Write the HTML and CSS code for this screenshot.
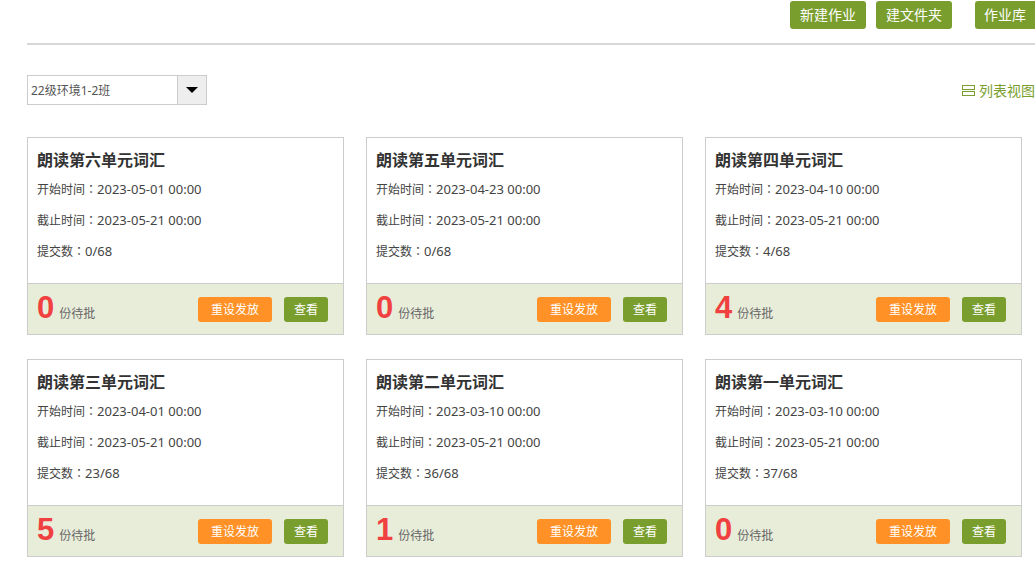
FILE: index.html
```html
<!DOCTYPE html>
<html lang="zh-CN">
<head>
    <meta charset="UTF-8">
    <title>作业</title>
    <link rel="stylesheet" href="styles.css">
</head>
<body>
    <header class="toolbar">
        <button type="button" class="btn btn-top">新建作业</button>
        <button type="button" class="btn btn-top">建文件夹</button>
        <button type="button" class="btn btn-top btn-library">作业库</button>
    </header>
    <div class="filter-bar">
        <div class="class-select">
            <select aria-label="班级">
                <option>22级环境1-2班</option>
            </select>
            <span class="select-arrow"></span>
        </div>
        <a href="#" class="view-link">
            <svg width="13" height="11" viewBox="0 0 13 11" fill="none" stroke="currentColor" aria-hidden="true">
                <rect x="0.5" y="0.5" width="12" height="4"/>
                <rect x="0.5" y="6.5" width="12" height="4"/>
            </svg>
            <span>列表视图</span>
        </a>
    </div>
    <main class="card-grid">
        <article class="card">
            <div class="card-body">
                <h2>朗读第六单元词汇</h2>
                <p>开始时间<span class="colon">：</span><span class="value">2023-05-01 00:00</span></p>
                <p>截止时间<span class="colon">：</span><span class="value">2023-05-21 00:00</span></p>
                <p>提交数<span class="colon">：</span><span class="value">0/68</span></p>
            </div>
            <div class="card-footer">
                <p class="pending"><strong>0</strong> 份待批</p>
                <button type="button" class="btn btn-reset">重设发放</button>
                <button type="button" class="btn">查看</button>
            </div>
        </article>
        <article class="card">
            <div class="card-body">
                <h2>朗读第五单元词汇</h2>
                <p>开始时间<span class="colon">：</span><span class="value">2023-04-23 00:00</span></p>
                <p>截止时间<span class="colon">：</span><span class="value">2023-05-21 00:00</span></p>
                <p>提交数<span class="colon">：</span><span class="value">0/68</span></p>
            </div>
            <div class="card-footer">
                <p class="pending"><strong>0</strong> 份待批</p>
                <button type="button" class="btn btn-reset">重设发放</button>
                <button type="button" class="btn">查看</button>
            </div>
        </article>
        <article class="card">
            <div class="card-body">
                <h2>朗读第四单元词汇</h2>
                <p>开始时间<span class="colon">：</span><span class="value">2023-04-10 00:00</span></p>
                <p>截止时间<span class="colon">：</span><span class="value">2023-05-21 00:00</span></p>
                <p>提交数<span class="colon">：</span><span class="value">4/68</span></p>
            </div>
            <div class="card-footer">
                <p class="pending"><strong>4</strong> 份待批</p>
                <button type="button" class="btn btn-reset">重设发放</button>
                <button type="button" class="btn">查看</button>
            </div>
        </article>
        <article class="card">
            <div class="card-body">
                <h2>朗读第三单元词汇</h2>
                <p>开始时间<span class="colon">：</span><span class="value">2023-04-01 00:00</span></p>
                <p>截止时间<span class="colon">：</span><span class="value">2023-05-21 00:00</span></p>
                <p>提交数<span class="colon">：</span><span class="value">23/68</span></p>
            </div>
            <div class="card-footer">
                <p class="pending"><strong>5</strong> 份待批</p>
                <button type="button" class="btn btn-reset">重设发放</button>
                <button type="button" class="btn">查看</button>
            </div>
        </article>
        <article class="card">
            <div class="card-body">
                <h2>朗读第二单元词汇</h2>
                <p>开始时间<span class="colon">：</span><span class="value">2023-03-10 00:00</span></p>
                <p>截止时间<span class="colon">：</span><span class="value">2023-05-21 00:00</span></p>
                <p>提交数<span class="colon">：</span><span class="value">36/68</span></p>
            </div>
            <div class="card-footer">
                <p class="pending"><strong>1</strong> 份待批</p>
                <button type="button" class="btn btn-reset">重设发放</button>
                <button type="button" class="btn">查看</button>
            </div>
        </article>
        <article class="card">
            <div class="card-body">
                <h2>朗读第一单元词汇</h2>
                <p>开始时间<span class="colon">：</span><span class="value">2023-03-10 00:00</span></p>
                <p>截止时间<span class="colon">：</span><span class="value">2023-05-21 00:00</span></p>
                <p>提交数<span class="colon">：</span><span class="value">37/68</span></p>
            </div>
            <div class="card-footer">
                <p class="pending"><strong>0</strong> 份待批</p>
                <button type="button" class="btn btn-reset">重设发放</button>
                <button type="button" class="btn">查看</button>
            </div>
        </article>
    </main>
</body>
</html>
```
FILE: styles.css
```css
* {
    box-sizing: border-box;
}
body {
    margin: 0;
    padding-left: 27px;
    overflow-x: hidden;
    background: #fff;
    color: #444;
    font-family: "Noto Sans", "Noto Sans CJK SC", sans-serif;
    font-size: 12px;
}
h2, p {
    margin: 0;
}
.btn {
    height: 25px;
    padding: 0 10px;
    border: none;
    border-radius: 3px;
    background: #7a9e2e;
    color: #fff;
    font-family: inherit;
    font-size: 12px;
    line-height: 25px;
    white-space: nowrap;
    cursor: pointer;
}
.btn:hover {
    opacity: 0.9;
}
/* top buttons */
.toolbar {
    display: flex;
    justify-content: flex-end;
    gap: 10px;
    padding: 1px 0 14px;
    border-bottom: 2px solid #d8d8d8;
}
.btn-top {
    height: 28px;
    font-size: 14px;
    line-height: 28px;
}
.btn-library {
    margin-left: 13px;
    padding: 0 9px;
    border-radius: 3px 0 0 3px;
}
/* class filter */
.filter-bar {
    display: flex;
    justify-content: space-between;
    align-items: center;
    padding: 30px 0 32px;
}
.class-select {
    position: relative;
    width: 180px;
}
.class-select select {
    display: block;
    width: 100%;
    height: 30px;
    padding: 0 32px 0 3px;
    border: 1px solid #ccc;
    border-radius: 0;
    background: #fff;
    color: #555;
    font-family: inherit;
    font-size: 12px;
    appearance: none;
}
.select-arrow {
    position: absolute;
    top: 1px;
    right: 1px;
    bottom: 1px;
    display: flex;
    align-items: center;
    justify-content: center;
    width: 29px;
    border-left: 1px solid #ccc;
    background: #eee;
    pointer-events: none;
}
.select-arrow::before {
    content: "";
    border: 6px solid transparent;
    border-top-color: #000;
    border-bottom: none;
}
.view-link {
    display: flex;
    align-items: center;
    gap: 4px;
    color: #7a9e2e;
    font-size: 14px;
    text-decoration: none;
}
/* homework cards */
.card-grid {
    display: grid;
    grid-template-columns: repeat(3, 1fr);
    gap: 24px 22px;
    padding: 0 13px 18px 0;
}
.card {
    border: 1px solid #ccc;
}
.card-body {
    padding: 10px 9px 17px;
}
.card-body h2 {
    color: #333;
    font-size: 16px;
    font-weight: bold;
    line-height: 25px;
}
.card-body p {
    height: 31px;
    line-height: 31px;
}
.colon {
    font-family: "Noto Sans CJK TC", sans-serif;
    font-feature-settings: "locl" 0;
}
.value {
    font-size: 13px;
}
.card-footer {
    display: flex;
    align-items: center;
    gap: 12px;
    height: 51px;
    padding: 0 15px 0 9px;
    border-top: 1px solid #ccc;
    background: #e8edda;
}
.pending {
    flex: 1;
    padding-top: 3px;
    color: #666;
    line-height: 40px;
}
.pending strong {
    margin-right: 2px;
    color: #f04040;
    font-family: "Liberation Sans", Arial, sans-serif;
    font-size: 31px;
}
.btn-reset {
    padding: 0 13px;
    background: #ff9126;
}
```
